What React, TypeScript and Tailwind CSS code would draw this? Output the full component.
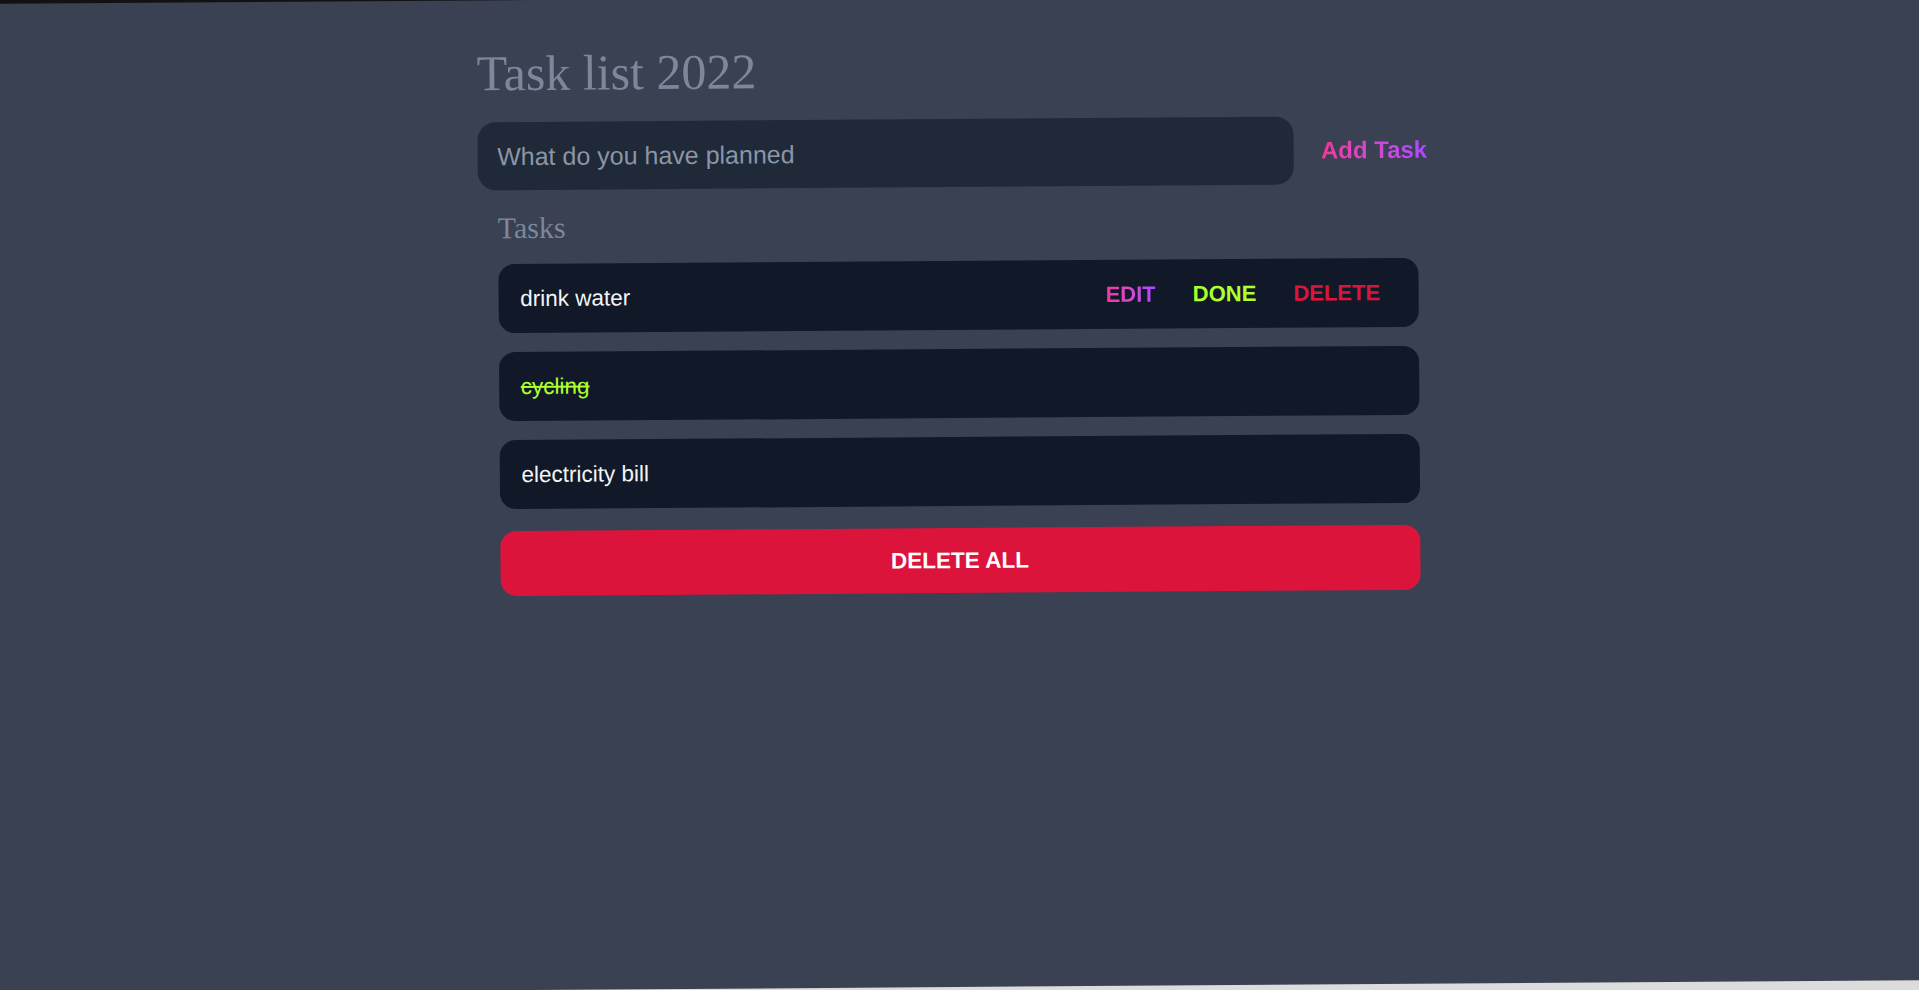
import { useState } from 'react';

type Task = { id: number; text: string; done: boolean };

const initialTasks: Task[] = [
  { id: 1, text: 'drink water', done: false },
  { id: 2, text: 'cycling', done: true },
  { id: 3, text: 'electricity bill', done: false },
];

export default function App() {
  const [tasks] = useState<Task[]>(initialTasks);

  return (
    <div className="h-screen w-full overflow-hidden bg-[linear-gradient(to_bottom,#121212_50%,#dcdcdc_50%)]">
      <div className="-mx-[12px] h-full bg-[#394152] -translate-y-[3px] -rotate-[0.4deg] font-['Liberation_Sans',Arial,sans-serif]">
        <div className="mx-auto w-[960px] pt-[44px]">
          {/* Header */}
          <h1 className="font-['Liberation_Serif','Times_New_Roman',serif] text-[50px] leading-[58px] text-[#7d879a]">
            Task list 2022
          </h1>

          {/* New task */}
          <div className="mt-[20px] flex items-center gap-[17px]">
            <input
              type="text"
              placeholder="What do you have planned"
              className="h-[68px] flex-1 rounded-[18px] bg-[#1f2937] pl-5 text-[25px] text-gray-100 outline-none placeholder:text-[#8b95a7]"
            />
            <button className="px-[10px] text-[24px] font-bold">
              <span className="bg-gradient-to-r from-pink-500 to-purple-500 bg-clip-text text-transparent">
                Add Task
              </span>
            </button>
          </div>

          {/* Task list */}
          <div className="px-5">
            <h2 className="mt-[21px] font-['Liberation_Serif','Times_New_Roman',serif] text-[30px] leading-[33px] text-[#7d879a]">
              Tasks
            </h2>

            <div className="mt-[20px] flex flex-col gap-[19px]">
              {tasks.map((task, i) => (
                <div
                  key={task.id}
                  className="flex h-[69px] items-center justify-between rounded-2xl bg-[#111827] pl-[22px] pr-[38px]"
                >
                  <span
                    className={
                      task.done
                        ? 'text-[22.5px] text-[#adff2f] line-through'
                        : 'text-[22.5px] text-gray-100'
                    }
                  >
                    {task.text}
                  </span>
                  {i === 0 && (
                    <div className="flex items-center gap-[37px] text-[22px] font-bold">
                      <button className="bg-gradient-to-r from-pink-500 to-purple-500 bg-clip-text text-transparent">
                        EDIT
                      </button>
                      <button className="text-[#adff2f]">DONE</button>
                      <button className="text-[#dc143c]">DELETE</button>
                    </div>
                  )}
                </div>
              ))}
            </div>

            <button className="mt-[22px] flex h-[65px] w-full items-center justify-center rounded-2xl bg-[#dc143c] text-[22.5px] font-bold text-white">
              DELETE ALL
            </button>
          </div>
        </div>
      </div>
    </div>
  );
}
